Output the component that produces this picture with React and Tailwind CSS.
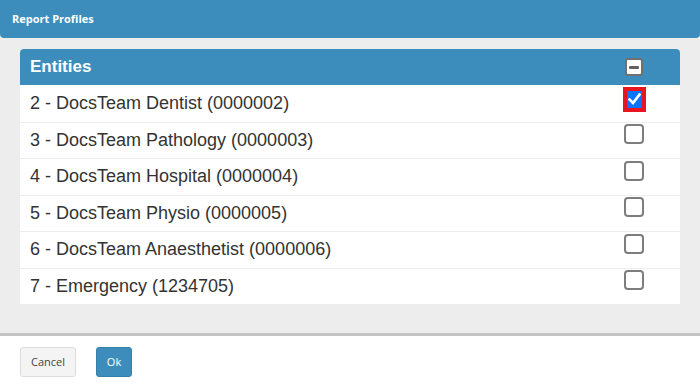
import React from "react";

const rows = [
  { label: "2 - DocsTeam Dentist (0000002)", checked: true },
  { label: "3 - DocsTeam Pathology (0000003)" },
  { label: "4 - DocsTeam Hospital (0000004)" },
  { label: "5 - DocsTeam Physio (0000005)" },
  { label: "6 - DocsTeam Anaesthetist (0000006)" },
  { label: "7 - Emergency (1234705)" },
];

function Check({ checked }) {
  if (checked) {
    return (
      <div className="w-[23px] h-[25px] border-4 border-[#e8141f] bg-[#0a74ff] flex items-center justify-center">
        <svg width="13" height="12" viewBox="0 0 13 12">
          <path d="M1.5 6.5 L5 10 L11.5 1.5" fill="none" stroke="white" strokeWidth="2.6" strokeLinecap="square" />
        </svg>
      </div>
    );
  }
  return <div className="w-[20px] h-[20px] border-2 border-[#7d7d7d] rounded-[4px] bg-white" />;
}

export default function App() {
  return (
    <div className="w-[700px] h-[387px] flex flex-col bg-white" style={{ fontFamily: "'Liberation Sans', Arial, sans-serif" }}>
      <div className="h-[38px] shrink-0 bg-[#3c8dbc] rounded-b-[4px] flex items-center px-3">
        <span className="text-white font-bold text-[11px]" style={{ fontFamily: "'Open Sans', sans-serif" }}>Report Profiles</span>
      </div>
      <div className="h-[298px] shrink-0 bg-[#ededed] border-b-[3px] border-[#c4c4c4] pt-[11px] px-5">
        <div className="bg-white rounded-t-[4px] overflow-hidden">
          <div className="h-[36px] bg-[#3c8dbc] flex items-center">
            <div className="flex-1 pl-[10px] text-white font-bold text-[17px]">Entities</div>
            <div className="w-[92px] flex justify-center">
              <div className="w-[18px] h-[18px] bg-white border-2 border-[#707070] rounded-[3px] flex items-center justify-center">
                <div className="w-[10px] h-[3px] bg-[#606060] rounded-[1px]" />
              </div>
            </div>
          </div>
          {rows.map((r, i) => (
            <div key={i} className={"h-[36.5px] flex items-stretch " + (i > 0 ? "border-t border-[#eeeeee]" : "")}>
              <div className="flex-1 pl-[10px] flex items-center text-[18px] text-[#333]">{r.label}</div>
              <div className="w-[92px] flex justify-center pt-[1.5px]">
                <Check checked={r.checked} />
              </div>
            </div>
          ))}
        </div>
      </div>
      <div className="flex-1 flex items-start gap-[20px] px-5 pt-[11px]" style={{ fontFamily: "'Open Sans', sans-serif" }}>
        <button className="h-[30px] w-[56px] bg-[#f4f4f4] border border-[#dddddd] rounded-[3px] text-[11px] text-[#444]">Cancel</button>
        <button className="h-[30px] w-[36px] bg-[#3c8dbc] border border-[#367fa9] rounded-[3px] text-[11px] text-white">Ok</button>
      </div>
    </div>
  );
}
